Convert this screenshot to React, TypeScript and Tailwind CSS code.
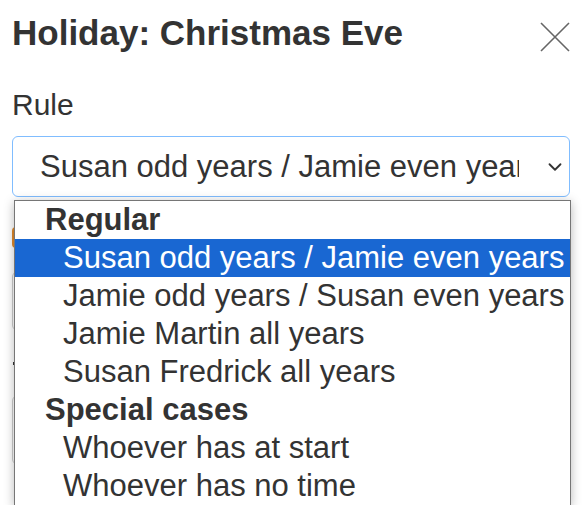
import { ChevronDown } from "lucide-react";

const groups = [
  {
    label: "Regular",
    options: [
      "Susan odd years / Jamie even years",
      "Jamie odd years / Susan even years",
      "Jamie Martin all years",
      "Susan Fredrick all years",
    ],
  },
  {
    label: "Special cases",
    options: ["Whoever has at start", "Whoever has no time"],
  },
];

const selected = "Susan odd years / Jamie even years";

export default function App() {
  return (
    <div className="relative h-[505px] w-[586px] overflow-hidden bg-white font-['Liberation_Sans',Arial,sans-serif] text-[#333]">
      <div className="flex items-start justify-between pl-3 pr-4 pt-[13px]">
        <h1 className="text-[35px] font-bold leading-[40px]">Holiday: Christmas Eve</h1>
        <svg width="30" height="30" viewBox="0 0 30 30" className="mt-[9px] text-[#666]">
          <path d="M1 1 L29 29 M29 1 L1 29" stroke="currentColor" strokeWidth="1.6" fill="none" />
        </svg>
      </div>

      <div className="pl-3 pr-4 pt-[35px]">
        <div className="text-[30px] leading-[34px]">Rule</div>

        <div className="mt-[14px] flex h-[61px] items-center rounded-[6px] border border-[#80bdff] pl-[27px] pr-[3px]">
          <span className="w-[479px] overflow-hidden whitespace-nowrap text-[31px] leading-[36px]">{selected}</span>
          <ChevronDown className="ml-auto h-[22px] w-[22px] shrink-0 text-[#333]" strokeWidth={2} />
        </div>

        {/* fields sitting behind the open list */}
        <div className="mt-[30px] h-[21px] w-[120px] rounded-[4px] bg-[#e08a2c]" />
        <div className="mt-[23px] h-[60px] rounded-[6px] border border-[#ccc]" />
        <div className="ml-[1px] mt-[31px] h-[3px] w-[3px] bg-[#333]" />
        <div className="mt-[30px] h-[70px] rounded-[6px] border border-[#ccc]" />
      </div>

      <div className="absolute left-[14px] top-[200px] w-[557px] border border-[#767676] bg-white text-[31px] leading-[38px] shadow-[0_2px_10px_rgba(0,0,0,0.28)]">
        {groups.map((g) => (
          <div key={g.label}>
            <div className="h-[38px] whitespace-nowrap pl-[30px] font-bold">{g.label}</div>
            {g.options.map((o) => (
              <div
                key={o}
                className={
                  o === selected
                    ? "h-[38px] whitespace-nowrap bg-[#1967d2] pl-[48px] text-white"
                    : "h-[38px] whitespace-nowrap pl-[48px]"
                }
              >
                {o}
              </div>
            ))}
          </div>
        ))}
      </div>
    </div>
  );
}
